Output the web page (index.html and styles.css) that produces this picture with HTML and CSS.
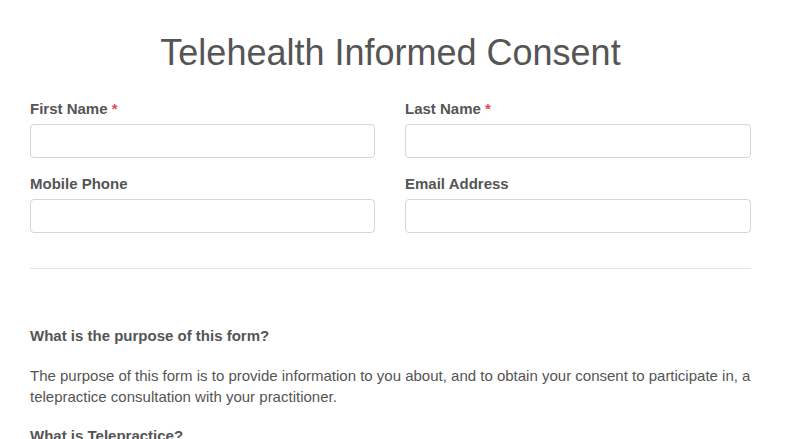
FILE: index.html
```html
<!DOCTYPE html>
<html lang="en">
<head>
    <meta charset="UTF-8">
    <meta name="viewport" content="width=device-width, initial-scale=1.0">
    <title>Telehealth Informed Consent</title>
    <link rel="stylesheet" href="styles.css">
</head>
<body>
    <div class="container">
        <h1>Telehealth Informed Consent</h1>
        <form class="details">
            <div class="field">
                <label for="first">First Name <span class="req">*</span></label>
                <input type="text" id="first">
            </div>
            <div class="field">
                <label for="last">Last Name <span class="req">*</span></label>
                <input type="text" id="last">
            </div>
            <div class="field">
                <label for="phone">Mobile Phone</label>
                <input type="tel" id="phone">
            </div>
            <div class="field">
                <label for="email">Email Address</label>
                <input type="email" id="email">
            </div>
        </form>
        <hr>
        <div class="consent">
            <h3>What is the purpose of this form?</h3>
            <p>The purpose of this form is to provide information to you about, and to obtain your consent to participate in, a telepractice consultation with your practitioner.</p>
            <h3>What is Telepractice?</h3>
            <p>Telepractice is a consultation conducted over video or telephone rather than in person.</p>
        </div>
    </div>
</body>
</html>
```

FILE: styles.css
```css
*{
    margin: 0px;
    padding: 0px;
    box-sizing: border-box;
}
body{
    font-family: "Liberation Sans", Arial, sans-serif;
    color: #555555;
    background: #ffffff;
}
.container{
    width: 721px;
    margin-left: 30px;
    padding-top: 32px;
}
h1{
    font-size: 36px;
    font-weight: normal;
    line-height: 41px;
    text-align: center;
    margin-bottom: 26px;
}
.details{
    display: grid;
    grid-template-columns: 345px 346px;
    column-gap: 30px;
    row-gap: 16px;
}
.field label{
    display: block;
    font-size: 15px;
    font-weight: bold;
    line-height: 20px;
    margin-bottom: 5px;
}
.req{
    color: #e8485e;
}
.field input{
    display: block;
    width: 100%;
    height: 34px;
    border: 1px solid #cdd9d9;
    border-radius: 4px;
    font-family: inherit;
    font-size: 15px;
    padding: 0 10px;
    color: #555555;
}
hr{
    border: none;
    border-top: 1px solid #dde5e5;
    margin-top: 35px;
    margin-bottom: 56px;
}
.consent h3{
    font-size: 15px;
    line-height: 21px;
    margin-bottom: 19px;
}
.consent p{
    font-size: 15px;
    line-height: 21px;
    margin-bottom: 18px;
}
```
